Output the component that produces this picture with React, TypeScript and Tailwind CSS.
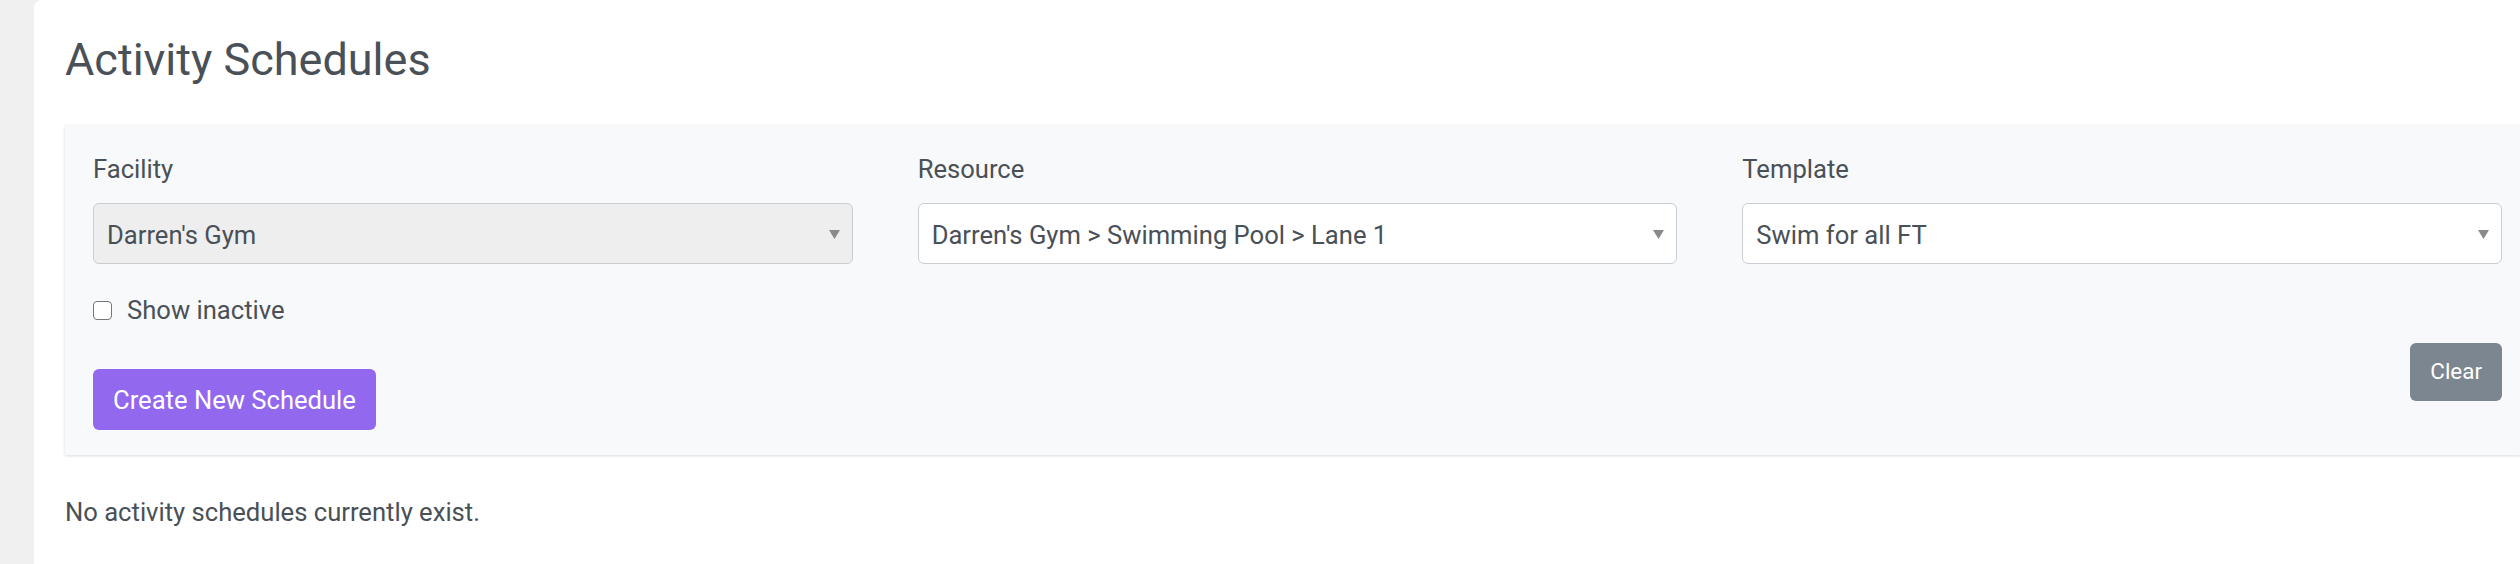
import React from 'react';

const FILTERS = [
  { id: 'facility', label: 'Facility', value: "Darren's Gym", disabled: true },
  { id: 'resource', label: 'Resource', value: "Darren's Gym > Swimming Pool > Lane 1", disabled: false },
  { id: 'template', label: 'Template', value: 'Swim for all FT', disabled: false },
];

function Caret() {
  return (
    <svg width="11" height="9" viewBox="0 0 11 9" className="shrink-0">
      <path d="M0 0 H11 L5.5 9 Z" fill="#8a8a8a" />
    </svg>
  );
}

function FakeSelect({ value, disabled }: { value: string; disabled: boolean }) {
  return (
    <div
      className={`h-[61px] w-full flex items-center justify-between pl-[13px] pr-[12px] pt-[3px] rounded-[6px] border border-[#c9ced3] text-[25.6px] text-[#495057] ${
        disabled ? 'bg-[#eeeeee]' : 'bg-white'
      }`}
    >
      <span className="truncate">{value}</span>
      <Caret />
    </div>
  );
}

export default function App() {
  return (
    <div className="min-h-screen w-full overflow-hidden bg-[#f0f0f0] pl-[34px] font-['Roboto',_'Liberation_Sans',_sans-serif]">
      <div className="min-h-[564px] bg-white rounded-tl-[8px] pl-[31px] pt-[33px]">
        <h1 className="text-[45px] leading-[1.2] font-normal text-[#495057]">Activity Schedules</h1>

        {/* filter panel */}
        <div className="mt-[38px] bg-[#f8f9fa] pl-[28px] pr-[18px] pt-[25px] pb-[25px] shadow-[0_1px_3px_rgba(0,0,0,0.14)]">
          <div className="grid grid-cols-3 gap-x-[65px]">
            {FILTERS.map(f => (
              <div key={f.id}>
                <label className="block text-[25.6px] leading-[1.5] text-[#495057] mb-[14.6px]">{f.label}</label>
                <FakeSelect value={f.value} disabled={f.disabled} />
              </div>
            ))}
          </div>

          <div className="mt-[27px] flex items-start justify-between">
            <div className="flex flex-col">
              <label className="flex items-center gap-[15px] text-[25.6px] leading-[1.5] text-[#495057]">
                <span className="w-[19px] h-[19px] rounded-[4px] border-[1.5px] border-[#767676] bg-white" />
                Show inactive
              </label>
              <button className="mt-[40px] self-start h-[61px] px-[20px] rounded-[6px] bg-[#9268ef] text-white text-[25.6px]">
                Create New Schedule
              </button>
            </div>
            <button className="mt-[52px] h-[58px] px-[20px] rounded-[6px] bg-[#7b8690] text-white text-[22.4px]">
              Clear
            </button>
          </div>
        </div>

        <p className="mt-[38px] text-[25.6px] leading-[1.5] text-[#495057]">No activity schedules currently exist.</p>
      </div>
    </div>
  );
}
